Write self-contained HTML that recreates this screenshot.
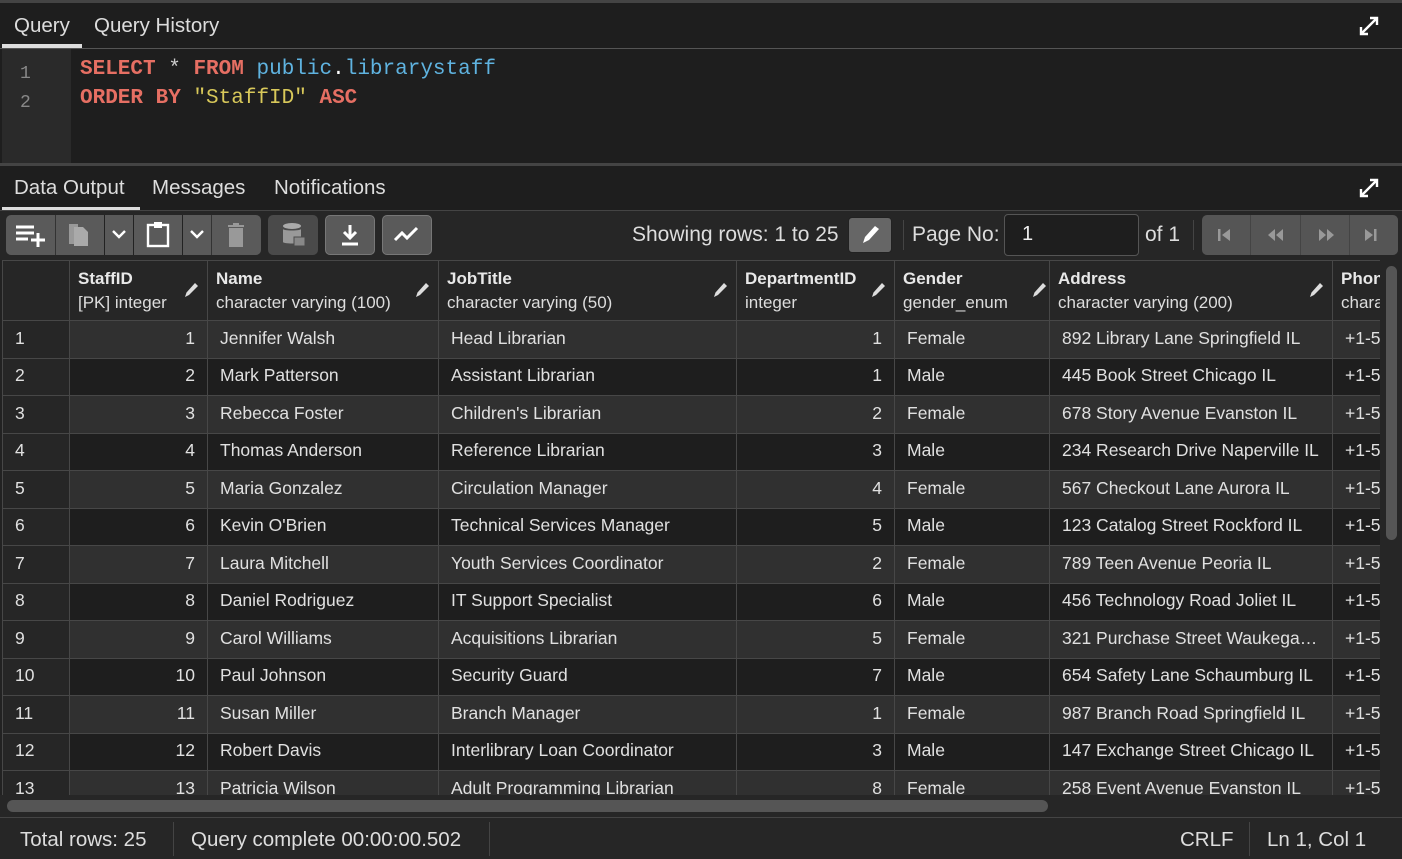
<!DOCTYPE html>
<html><head><meta charset="utf-8">
<style>
*{box-sizing:border-box;margin:0;padding:0}
body{width:1402px;height:859px;background:#222;color:#e0e0e0;font-family:"Liberation Sans",sans-serif;position:relative;overflow:hidden;font-size:18px}
.abs{position:absolute}
.tabbar{left:0;width:1402px;background:#1e1e1e}
.tab{position:absolute;font-size:20.5px;color:#ddd}
.code{font-family:"Liberation Mono",monospace;font-size:21px;position:absolute;left:80px;white-space:pre}
.kw{color:#e66f63;font-weight:bold}
.id{color:#5fb3e0}
.str{color:#d8c85a}
.btn{position:absolute;top:215px;height:40px;background:#5a5a5a;border-radius:5px}
.grid{position:absolute;left:2px;top:260px;width:1378px;height:535px;overflow:hidden}
table{border-collapse:collapse;table-layout:fixed;width:1440px}
td,th{border:1px solid #474747;white-space:nowrap;overflow:hidden;text-overflow:ellipsis;font-weight:normal;text-align:left}
th{height:60px;background:#262626;vertical-align:top;padding:6px 8px 0 8px;font-size:17px;line-height:24px;position:relative;color:#ddd}
th b{color:#e8e8e8}
th svg{position:absolute;right:8px;top:20px}
td{height:37.5px;padding:0 12px;font-size:17.5px;color:#e0e0e0;padding-bottom:2px}
tr.o td{background:#303030}
tr.e td{background:#1e1e1e}
td.rn{background:#262626!important;padding-left:12px}
td.r{text-align:right}
</style></head><body>
<div class="abs" style="left:0;top:0;width:1402px;height:3px;background:#444"></div>
<div class="abs tabbar" style="top:3px;height:45px"></div>
<div class="tab" style="left:14px;top:14px">Query</div>
<div class="tab" style="left:94px;top:14px">Query History</div>
<div class="abs" style="left:2px;top:44px;width:80px;height:4px;background:#ddd"></div>
<div class="abs" style="left:0;top:48px;width:1402px;height:1px;background:#555"></div>
<svg class="abs" style="left:1358px;top:15px" width="22" height="22" viewBox="0 0 22 22"><path d="M3 19L19 3M12 3h7v7M3 12v7h7" stroke="#fff" stroke-width="2.4" fill="none"/></svg>
<div class="abs" style="left:0;top:49px;width:1402px;height:114px;background:#1e1e1e"></div>
<div class="abs" style="left:2px;top:49px;width:69px;height:114px;background:#2a2a2a"></div>
<div class="abs" style="left:20px;top:60px;font-family:'Liberation Mono',monospace;font-size:18px;color:#888;line-height:29px">1<br>2</div>
<div class="code" style="top:58px"><span class="kw">SELECT</span> <span style="color:#ccc">*</span> <span class="kw">FROM</span> <span class="id">public</span><span style="color:#fff">.</span><span class="id">librarystaff</span></div>
<div class="code" style="top:87px"><span class="kw">ORDER BY</span> <span class="str">"StaffID"</span> <span class="kw">ASC</span></div>
<div class="abs" style="left:0;top:163px;width:1402px;height:3px;background:#444"></div>
<div class="abs tabbar" style="top:166px;height:44px"></div>
<div class="tab" style="left:14px;top:176px">Data Output</div>
<div class="tab" style="left:152px;top:176px">Messages</div>
<div class="tab" style="left:274px;top:176px">Notifications</div>
<div class="abs" style="left:2px;top:207px;width:138px;height:4px;background:#ddd"></div>
<svg class="abs" style="left:1358px;top:177px" width="22" height="22" viewBox="0 0 22 22"><path d="M3 19L19 3M12 3h7v7M3 12v7h7" stroke="#fff" stroke-width="2.4" fill="none"/></svg>
<div class="abs" style="left:0;top:210px;width:1402px;height:50px;background:#262626;border-top:1px solid #444"></div>
<div class="btn" style="left:6px;width:255px"></div>
<div class="abs" style="left:55px;top:215px;width:1px;height:40px;background:#333"></div>
<div class="abs" style="left:104px;top:215px;width:1px;height:40px;background:#222"></div>
<div class="abs" style="left:133px;top:215px;width:1px;height:40px;background:#222"></div>
<div class="abs" style="left:182px;top:215px;width:1px;height:40px;background:#222"></div>
<div class="abs" style="left:211px;top:215px;width:1px;height:40px;background:#333"></div>
<svg class="abs" style="left:14px;top:223px" width="34" height="24"><path d="M2 4h18M2 10h18M2 16h12M24 10v14M17 17h14" stroke="#fff" stroke-width="3" fill="none"/></svg>
<svg class="abs" style="left:67px;top:222px" width="26" height="26"><path d="M2 2h9v20H2z" fill="#999"/><path d="M7 5h9l5 5v14H7z" fill="#aaa"/></svg>
<svg class="abs" style="left:111px;top:228px" width="16" height="12"><path d="M2 3l6 6 6-6" stroke="#fff" stroke-width="2.4" fill="none"/></svg>
<svg class="abs" style="left:146px;top:221px" width="24" height="27"><rect x="2" y="4" width="20" height="21" stroke="#fff" stroke-width="2.4" fill="none"/><rect x="8" y="1" width="8" height="6" fill="#fff"/></svg>
<svg class="abs" style="left:189px;top:228px" width="16" height="12"><path d="M2 3l6 6 6-6" stroke="#fff" stroke-width="2.4" fill="none"/></svg>
<svg class="abs" style="left:227px;top:223px" width="18" height="24"><path d="M1 3h16M6 1h6M3 6h12v17H3z" fill="#999" stroke="#999" stroke-width="2"/></svg>
<div class="btn" style="left:268px;width:50px;background:#4a4a4a"></div>
<svg class="abs" style="left:281px;top:222px" width="26" height="26"><ellipse cx="11" cy="4" rx="9" ry="3" fill="#aaa"/><path d="M2 7v13c0 2 18 2 18 0V7c0 2-18 2-18 0z" fill="#999"/><rect x="13" y="15" width="11" height="9" fill="#888" stroke="#4a4a4a"/></svg>
<div class="btn" style="left:325px;width:50px;border:1px solid #777"></div>
<svg class="abs" style="left:339px;top:223px" width="22" height="24"><path d="M11 2v13M5 9l6 6 6-6M3 21h16" stroke="#fff" stroke-width="3" fill="none"/></svg>
<div class="btn" style="left:382px;width:50px;border:1px solid #777"></div>
<svg class="abs" style="left:393px;top:226px" width="28" height="18"><path d="M2 14l7-7 5 5 10-10" stroke="#fff" stroke-width="3" fill="none"/></svg>
<div class="abs" style="left:632px;top:223px;font-size:21px;color:#ddd">Showing rows: 1 to 25</div>
<div class="abs" style="left:848px;top:217px;width:44px;height:36px;background:#666;border-radius:4px;border:1px solid #222"></div>
<svg class="abs" style="left:859px;top:223px" width="22" height="24"><path d="M4 20l2-6L16 3l4 3-10 11z" fill="#fff"/></svg>
<div class="abs" style="left:903px;top:220px;width:1px;height:30px;background:#444"></div>
<div class="abs" style="left:912px;top:223px;font-size:21px;color:#ddd">Page No:</div>
<div class="abs" style="left:1004px;top:214px;width:135px;height:42px;background:#1e1e1e;border:1px solid #555;border-radius:4px"></div>
<div class="abs" style="left:1022px;top:223px;font-size:20px;color:#eee">1</div>
<div class="abs" style="left:1145px;top:223px;font-size:21px;color:#ddd">of 1</div>
<div class="abs" style="left:1193px;top:220px;width:1px;height:30px;background:#444"></div>
<div class="abs" style="left:1202px;top:215px;width:196px;height:40px;background:#555;border-radius:5px"></div>
<div class="abs" style="left:1250px;top:215px;width:1px;height:40px;background:#444"></div>
<div class="abs" style="left:1300px;top:215px;width:1px;height:40px;background:#444"></div>
<div class="abs" style="left:1349px;top:215px;width:1px;height:40px;background:#444"></div>
<svg class="abs" style="left:1214px;top:226px" width="172" height="18" fill="#999"><rect x="4" y="3" width="2.5" height="12"/><path d="M8 9l8-6v12z"/><path d="M54 9l7-6v12zM62 9l7-6v12z"/><path d="M105 3l7 6-7 6zM113 3l7 6-7 6z"/><path d="M151 3l8 6-8 6z"/><rect x="160" y="3" width="2.5" height="12"/></svg>
<div class="grid">
<table>
<colgroup><col style="width:67px"><col style="width:138px"><col style="width:231px"><col style="width:298px"><col style="width:158px"><col style="width:155px"><col style="width:283px"><col style="width:110px"></colgroup>
<tr><th style="background:#262626"></th>
<th><b>StaffID</b><br>[PK] integer<svg width="16" height="18"><path d="M2 16l1.5-4.5L12 2l3 3-9 9z" fill="#ddd"/></svg></th>
<th><b>Name</b><br>character varying (100)<svg width="16" height="18"><path d="M2 16l1.5-4.5L12 2l3 3-9 9z" fill="#ddd"/></svg></th>
<th><b>JobTitle</b><br>character varying (50)<svg width="16" height="18"><path d="M2 16l1.5-4.5L12 2l3 3-9 9z" fill="#ddd"/></svg></th>
<th><b>DepartmentID</b><br>integer<svg width="16" height="18"><path d="M2 16l1.5-4.5L12 2l3 3-9 9z" fill="#ddd"/></svg></th>
<th><b>Gender</b><br>gender_enum<svg width="16" height="18" style="right:2px"><path d="M2 16l1.5-4.5L12 2l3 3-9 9z" fill="#ddd"/></svg></th>
<th><b>Address</b><br>character varying (200)<svg width="16" height="18"><path d="M2 16l1.5-4.5L12 2l3 3-9 9z" fill="#ddd"/></svg></th>
<th><b>Phone</b><br>character</th></tr>
<tr class="o"><td class="rn">1</td><td class="r">1</td><td>Jennifer Walsh</td><td>Head Librarian</td><td class="r">1</td><td>Female</td><td>892 Library Lane Springfield IL</td><td>+1-555</td></tr>
<tr class="e"><td class="rn">2</td><td class="r">2</td><td>Mark Patterson</td><td>Assistant Librarian</td><td class="r">1</td><td>Male</td><td>445 Book Street Chicago IL</td><td>+1-555</td></tr>
<tr class="o"><td class="rn">3</td><td class="r">3</td><td>Rebecca Foster</td><td>Children's Librarian</td><td class="r">2</td><td>Female</td><td>678 Story Avenue Evanston IL</td><td>+1-555</td></tr>
<tr class="e"><td class="rn">4</td><td class="r">4</td><td>Thomas Anderson</td><td>Reference Librarian</td><td class="r">3</td><td>Male</td><td>234 Research Drive Naperville IL</td><td>+1-555</td></tr>
<tr class="o"><td class="rn">5</td><td class="r">5</td><td>Maria Gonzalez</td><td>Circulation Manager</td><td class="r">4</td><td>Female</td><td>567 Checkout Lane Aurora IL</td><td>+1-555</td></tr>
<tr class="e"><td class="rn">6</td><td class="r">6</td><td>Kevin O'Brien</td><td>Technical Services Manager</td><td class="r">5</td><td>Male</td><td>123 Catalog Street Rockford IL</td><td>+1-555</td></tr>
<tr class="o"><td class="rn">7</td><td class="r">7</td><td>Laura Mitchell</td><td>Youth Services Coordinator</td><td class="r">2</td><td>Female</td><td>789 Teen Avenue Peoria IL</td><td>+1-555</td></tr>
<tr class="e"><td class="rn">8</td><td class="r">8</td><td>Daniel Rodriguez</td><td>IT Support Specialist</td><td class="r">6</td><td>Male</td><td>456 Technology Road Joliet IL</td><td>+1-555</td></tr>
<tr class="o"><td class="rn">9</td><td class="r">9</td><td>Carol Williams</td><td>Acquisitions Librarian</td><td class="r">5</td><td>Female</td><td>321 Purchase Street Waukegan IL</td><td>+1-555</td></tr>
<tr class="e"><td class="rn">10</td><td class="r">10</td><td>Paul Johnson</td><td>Security Guard</td><td class="r">7</td><td>Male</td><td>654 Safety Lane Schaumburg IL</td><td>+1-555</td></tr>
<tr class="o"><td class="rn">11</td><td class="r">11</td><td>Susan Miller</td><td>Branch Manager</td><td class="r">1</td><td>Female</td><td>987 Branch Road Springfield IL</td><td>+1-555</td></tr>
<tr class="e"><td class="rn">12</td><td class="r">12</td><td>Robert Davis</td><td>Interlibrary Loan Coordinator</td><td class="r">3</td><td>Male</td><td>147 Exchange Street Chicago IL</td><td>+1-555</td></tr>
<tr class="o"><td class="rn">13</td><td class="r">13</td><td>Patricia Wilson</td><td>Adult Programming Librarian</td><td class="r">8</td><td>Female</td><td>258 Event Avenue Evanston IL</td><td>+1-555</td></tr>
</table>
</div>
<div class="abs" style="left:1380px;top:260px;width:22px;height:535px;background:#262626"></div>
<div class="abs" style="left:1386px;top:266px;width:11px;height:274px;background:#555;border-radius:6px"></div>
<div class="abs" style="left:0;top:795px;width:1402px;height:22px;background:#262626"></div>
<div class="abs" style="left:7px;top:800px;width:1041px;height:12px;background:#555;border-radius:6px"></div>
<div class="abs" style="left:0;top:817px;width:1402px;height:1px;background:#444"></div>
<div class="abs" style="left:0;top:818px;width:1402px;height:41px;background:#262626"></div>
<div class="abs" style="left:20px;top:828px;font-size:20.5px;color:#ddd">Total rows: 25</div>
<div class="abs" style="left:173px;top:822px;width:1px;height:34px;background:#444"></div>
<div class="abs" style="left:191px;top:828px;font-size:20.5px;color:#ddd">Query complete 00:00:00.502</div>
<div class="abs" style="left:489px;top:822px;width:1px;height:34px;background:#444"></div>
<div class="abs" style="left:1180px;top:828px;font-size:20.5px;color:#ddd">CRLF</div>
<div class="abs" style="left:1249px;top:822px;width:1px;height:34px;background:#444"></div>
<div class="abs" style="left:1267px;top:828px;font-size:20.5px;color:#ddd">Ln 1, Col 1</div>
</body></html>
